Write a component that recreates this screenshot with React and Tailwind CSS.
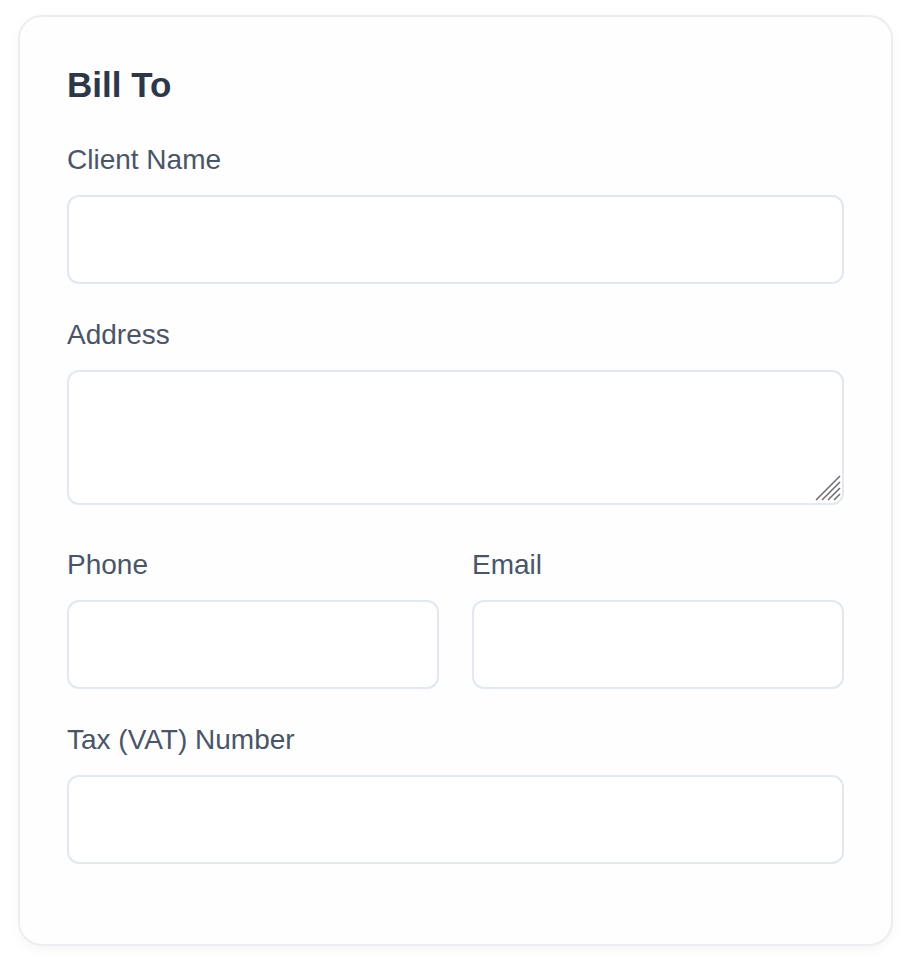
import { useState } from "react";

function Field({ label, children, className = "" }) {
  return (
    <div className={className}>
      <label className="mb-[15px] block text-[28px] leading-[40px] text-[#4a5568]">{label}</label>
      {children}
    </div>
  );
}

const inputClass =
  "block w-full rounded-[12px] border-2 border-[#e2e8f0] bg-white px-[24px] text-[28px] text-[#2d3748] outline-none";

function ResizeGrip() {
  return (
    <svg
      className="pointer-events-none absolute bottom-[4px] right-[3px]"
      width="26"
      height="26"
      viewBox="0 0 26 26"
      fill="none"
      stroke="#6f6f6f"
      strokeWidth="1.6"
    >
      <line x1="1" y1="25" x2="25" y2="1" />
      <line x1="7" y1="25" x2="25" y2="7" />
      <line x1="13" y1="25" x2="25" y2="13" />
      <line x1="19" y1="25" x2="25" y2="19" />
    </svg>
  );
}

export default function App() {
  const [form, setForm] = useState({ name: "", address: "", phone: "", email: "", tax: "" });
  const update = (key) => (event) => setForm((current) => ({ ...current, [key]: event.target.value }));

  return (
    <div className="min-h-[962px] bg-white pl-[18px] pt-[15px] font-['Liberation_Sans',Arial,sans-serif]">
      <section className="h-[931px] w-[875px] rounded-[24px] border-2 border-[#ebedf0] bg-[#fefefe] px-[47px] pt-[47px] shadow-[0_4px_12px_rgba(0,0,0,0.04)]">
        <h2 className="mb-[34px] text-[35px] font-bold leading-[42px] text-[#2d3748]">Bill To</h2>

        <Field label="Client Name">
          <input type="text" value={form.name} onChange={update("name")} className={`${inputClass} h-[89px]`} />
        </Field>

        <Field label="Address" className="mt-[31px]">
          <div className="relative">
            <textarea
              value={form.address}
              onChange={update("address")}
              className={`${inputClass} h-[135px] resize-none py-[20px]`}
            />
            <ResizeGrip />
          </div>
        </Field>

        <div className="mt-[40px] grid grid-cols-2 gap-[33px]">
          <Field label="Phone">
            <input type="tel" value={form.phone} onChange={update("phone")} className={`${inputClass} h-[89px]`} />
          </Field>
          <Field label="Email">
            <input type="email" value={form.email} onChange={update("email")} className={`${inputClass} h-[89px]`} />
          </Field>
        </div>

        <Field label="Tax (VAT) Number" className="mt-[31px]">
          <input type="text" value={form.tax} onChange={update("tax")} className={`${inputClass} h-[89px]`} />
        </Field>
      </section>
    </div>
  );
}
